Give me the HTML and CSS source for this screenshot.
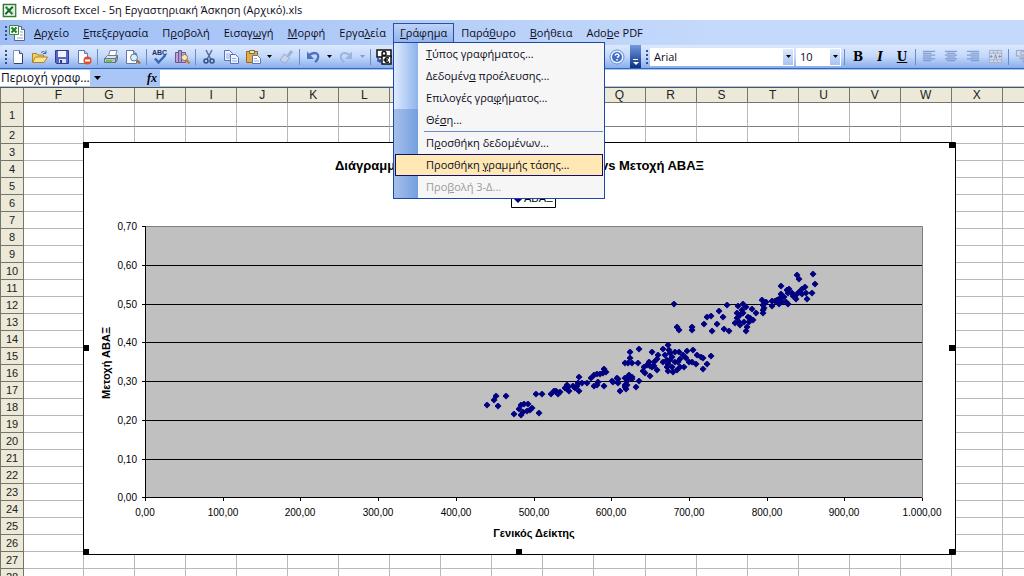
FILE: index.html
```html
<!DOCTYPE html>
<html lang="el">
<head>
<meta charset="utf-8">
<title>Microsoft Excel - 5η Εργαστηριακή Άσκηση (Αρχικό).xls</title>
<link rel="stylesheet" href="styles.css">
</head>
<body>
<div class="app">
  <header class="titlebar">
    <svg class="logo" viewBox="0 0 16 16"><path fill="#fff" stroke="#2f7d32" stroke-width="1.6" d="M1.500 1.500h13v13h-13z"/><path fill="#dcebdc" d="M10 3h4v10h-4z"/><path stroke="#2f8a3a" stroke-width="2.600" d="m4 4 7 8"/><path stroke="#14662a" stroke-width="2.200" d="m11.500 4-8 8"/></svg>
    <span>Microsoft Excel - 5η Εργαστηριακή Άσκηση (Αρχικό).xls</span>
  </header>

  <nav class="menubar">
    <i class="grip"></i>
    <svg class="doc" viewBox="0 0 18 18"><path fill="#fff" stroke="#52658f" d="M6.500 2.500h7l3 3v11h-10z"/><path fill="#c9d6ee" stroke="#52658f" d="M13.500 2.500v3h3"/><path stroke="#8ea1c6" d="M12 8h3M12 11h3M9 14h6"/><path fill="#f2fbf2" stroke="#3c8b42" d="M1.500 1.500h9v9h-9z"/><path stroke="#207a30" stroke-width="2" d="m3.500 3.500 5 5M8.500 3.500l-5 5"/></svg>
    <button class="menu"><u>Α</u>ρχείο</button>
    <button class="menu"><u>Ε</u>πεξεργασία</button>
    <button class="menu">Π<u>ρ</u>οβολή</button>
    <button class="menu">Εισαγ<u>ω</u>γή</button>
    <button class="menu"><u>Μ</u>ορφή</button>
    <button class="menu">Εργα<u>λ</u>εία</button>
    <div class="open">
      <button class="menu active"><u>Γ</u>ράφημα</button>
      <div class="popup">
        <button><u>Τ</u>ύπος γραφήματος...</button>
        <button>Δεδομέν<u>α</u> προέλευσης...</button>
        <button>Επιλογές γρα<u>φ</u>ήματος...</button>
        <button>Θέ<u>σ</u>η...</button>
        <hr>
        <button>Π<u>ρ</u>οσθήκη δεδομένων...</button>
        <button class="hot">Προσθήκη <u>γ</u>ραμμής τάσης...</button>
        <button disabled>Προ<u>β</u>ολή 3-Δ...</button>
      </div>
    </div>
    <button class="menu">Παρά<u>θ</u>υρο</button>
    <button class="menu"><u>Β</u>οήθεια</button>
    <button class="menu">Ado<u>b</u>e PDF</button>
  </nav>

  <div class="toolbars">
    <div class="bar standard">
      <i class="grip"></i>
      <button class="tool" aria-label="Νέο"><svg viewBox="0 0 16 16"><path fill="#fff" stroke="#7f94c4" d="M3.500 1.500h6l3 3v10h-9z"/><path fill="#c3d2ef" stroke="#3c5590" d="M9.500 1.500v3h3"/><path stroke="#2d4377" d="M12.500 5v9.500H4"/></svg></button>
      <button class="tool" aria-label="Άνοιγμα"><svg viewBox="0 0 16 16"><path fill="#f5cf62" stroke="#a9822b" d="M.5 13.500v-9h4l1 1.500h6v3"/><path fill="#ffe48f" stroke="#a9822b" d="m.5 13.500 3-5.500h12l-3.500 5.500z"/><path stroke="#4169a8" d="M9 3.500q2.500-2 4.500 0M14 1.500v3h-3"/></svg></button>
      <button class="tool" aria-label="Αποθήκευση"><svg viewBox="0 0 16 16"><path fill="#5768c4" stroke="#2f3d8c" d="M1.500 1.500h13v13h-12l-1-1z"/><path fill="#f2f5ff" d="M4 2h8v6H4z"/><path fill="#dce2f6" d="M5 10h7v4H5z"/><path fill="#2f3d8c" d="M6 11h2v3H6z"/></svg></button>
      <button class="tool" aria-label="Δικαιώματα"><svg viewBox="0 0 16 16"><path fill="#fff" stroke="#6479a8" d="M2.500 1.500h6l3 3v10h-9z"/><path fill="#c3d2ef" stroke="#6479a8" d="M8.500 1.500v3h3"/><circle cx="11.500" cy="11.500" r="4" fill="#df4e2e"/><path stroke="#fff" stroke-width="2" d="M9 11.500h5"/></svg></button>
      <i class="sep"></i>
      <button class="tool" aria-label="Εκτύπωση"><svg viewBox="0 0 16 16"><path fill="#fff" stroke="#7485a3" d="M5.500 7 7 1.500h7L12.500 7"/><path fill="#dde4ea" stroke="#6d7f92" d="m1.500 9.500 3-3h10l-2 3z"/><path fill="#b4c3c8" stroke="#63757d" d="M1.500 9.500h11v4h-11z"/><path fill="#8fa2a9" stroke="#63757d" d="m12.500 9.500 2-3v4l-2 3z"/><path stroke="#70c060" stroke-width="2" d="M3 12h6"/></svg></button>
      <button class="tool" aria-label="Προεπισκόπηση"><svg viewBox="0 0 16 16"><path fill="#fff" stroke="#6479a8" d="M1.500 1.500h7l3 3v10h-10z"/><path fill="#c3d2ef" stroke="#6479a8" d="M8.500 1.500v3h3"/><circle cx="9" cy="8.500" r="3.500" fill="#d5effb" stroke="#62748e"/><path stroke="#a2722d" stroke-width="2.400" d="m12 11.500 3 3"/></svg></button>
      <i class="sep"></i>
      <button class="tool" aria-label="Ορθογραφία"><svg viewBox="0 0 16 16"><text x="0" y="6" class="abc">ABC</text><path stroke="#3b66b8" stroke-width="2.500" d="m3 9.500 3.500 4L13.500 6"/></svg></button>
      <button class="tool" aria-label="Έρευνα"><svg viewBox="0 0 16 16"><path fill="#c9a0d6" stroke="#76508e" d="M1.500 3.500h3v10h-3z"/><path fill="#9a9fd8" stroke="#605a9f" d="M4.500 1.500h3v12h-3z"/><path fill="#d3a5cc" stroke="#84507b" d="M7.500 3.500h4v10h-4z"/><circle cx="10.500" cy="8.500" r="3" fill="#f5e9c7" stroke="#8a7446"/><path stroke="#b98432" stroke-width="2.400" d="m12.500 11 3 3.500"/></svg></button>
      <i class="sep"></i>
      <button class="tool" aria-label="Αποκοπή"><svg viewBox="0 0 16 16"><path stroke="#536e9e" stroke-width="1.500" d="m5 1 5 9.500M11 1 6 10.500"/><circle cx="5" cy="12" r="2" stroke="#334f87" stroke-width="1.500"/><circle cx="11" cy="12" r="2" stroke="#334f87" stroke-width="1.500"/></svg></button>
      <button class="tool" aria-label="Αντιγραφή"><svg viewBox="0 0 16 16"><path fill="#edf3ff" stroke="#5874b3" d="M1.500 1.500h5l3 3v7h-8z"/><path stroke="#93aadb" d="M3 5h4M3 7h4M3 9h4"/><path fill="#edf3ff" stroke="#5874b3" d="M7.500 5.500h5l3 3v6h-8z"/><path stroke="#93aadb" d="M9 9.500h4M9 12h5"/></svg></button>
      <button class="tool" aria-label="Επικόλληση"><svg viewBox="0 0 16 16"><path fill="#e1ad45" stroke="#916b25" d="M1.500 2.500h11v11h-11z"/><path fill="#eee6bb" stroke="#806a38" d="M4.500 1.500h5v3h-5z"/><path fill="#fff" stroke="#5874b3" d="M7.500 6.500h5l3 3v5h-8z"/><path stroke="#93aadb" d="M9 9.500h3M9 12h5"/></svg></button>
      <button class="drop" aria-label="Επιλογές επικόλλησης"><svg viewBox="0 0 5 3"><path d="M0 0h5L2.500 3z"/></svg></button>
      <button class="tool" aria-label="Πινέλο μορφοποίησης"><svg viewBox="0 0 16 16"><path stroke="#9eb3d5" stroke-width="3" d="m14 2-4 5"/><path fill="#c6d3e8" stroke="#96abcf" d="m6 5 5.500 4L7 14l-5-2.500z"/></svg></button>
      <i class="sep"></i>
      <button class="tool" aria-label="Αναίρεση"><svg viewBox="0 0 16 16"><path stroke="#4f70bf" stroke-width="2.300" d="M4 6q7-4 9 0 1 4-3 7"/><path fill="#4f70bf" d="M2 2.500V10h7z"/></svg></button>
      <button class="drop" aria-label="Λίστα αναίρεσης"><svg viewBox="0 0 5 3"><path d="M0 0h5L2.500 3z"/></svg></button>
      <button class="tool" aria-label="Επανάληψη"><svg viewBox="0 0 16 16"><path stroke="#9db4da" stroke-width="2" d="M12 6Q5 2 3 6q-1 4 3 7"/><path fill="#9db4da" d="M14 2.500V10H7z"/></svg></button>
      <button class="drop dim" aria-label="Λίστα επανάληψης"><svg viewBox="0 0 5 3"><path d="M0 0h5L2.500 3z"/></svg></button>
      <i class="sep"></i>
      <button class="tool" aria-label="Μετατροπή ευρώ"><svg viewBox="0 0 16 16"><path fill="#fff" stroke="#111" stroke-width="1.500" d="M1 1h14v7H1z"/><circle cx="8" cy="4.500" r="2" stroke="#111" stroke-width="1.500"/><path fill="#fff" stroke="#111" stroke-width="1.500" d="M6 7h9v8H6z"/><path stroke="#111" stroke-width="1.500" d="M13 9q-4-1-4 2t4 2M7.500 11H12"/><path stroke="#2846a8" stroke-width="1.500" d="M2 9v3h3M3.500 10.500 5 12l-1.500 1.500"/></svg></button>
      <button class="tool help" aria-label="Βοήθεια"><svg viewBox="0 0 16 16"><circle cx="8" cy="8" r="7" fill="#e8f1ff" stroke="#6c8fce"/><circle cx="8" cy="8" r="5" fill="#3f6fc9"/><path stroke="#fff" stroke-width="1.500" d="M6 6.500Q6.500 5 8 5t2 1.500q0 1-2 2M8 10v1.500"/></svg></button>
      <button class="cap" aria-label="Επιλογές γραμμής εργαλείων"><svg viewBox="0 0 8 8"><path stroke="#fff" d="M1 1.500h5"/><path fill="#fff" d="M1 4h6L4 7z"/></svg></button>
    </div>
    <div class="bar format">
      <i class="grip"></i>
      <span class="combo font"><select aria-label="Γραμματοσειρά"><option>Arial</option></select><i class="arrow"><svg viewBox="0 0 5 3"><path d="M0 0h5L2.500 3z"/></svg></i></span>
      <span class="combo size"><select aria-label="Μέγεθος"><option>10</option></select><i class="arrow"><svg viewBox="0 0 5 3"><path d="M0 0h5L2.500 3z"/></svg></i></span>
      <i class="sep"></i>
      <button class="tool letter"><b>B</b></button>
      <button class="tool letter"><em>I</em></button>
      <button class="tool letter"><u>U</u></button>
      <i class="sep"></i>
      <button class="tool" aria-label="Στοίχιση αριστερά"><svg viewBox="0 0 16 16"><path stroke="#6f8cc4" d="M1 2.500h13M1 4.500h9M1 6.500h13M1 8.500h9M1 10.500h13M1 12.500h9"/></svg></button>
      <button class="tool" aria-label="Στοίχιση στο κέντρο"><svg viewBox="0 0 16 16"><path stroke="#6f8cc4" d="M1 2.500h13M3 4.500h9M1 6.500h13M3 8.500h9M1 10.500h13M3 12.500h9"/></svg></button>
      <button class="tool" aria-label="Στοίχιση δεξιά"><svg viewBox="0 0 16 16"><path stroke="#6f8cc4" d="M1 2.500h13M5 4.500h9M1 6.500h13M5 8.500h9M1 10.500h13M5 12.500h9"/></svg></button>
      <button class="tool" aria-label="Συγχώνευση"><svg viewBox="0 0 16 16"><path fill="#d3dbea" stroke="#a3b0c9" d="M1.500 1.500h13v13h-13zM1.500 4.500h13M1.500 11.500h13M6 1.500v3M10 1.500v3M6 11.500v3M10 11.500v3"/><path stroke="#7d8fb4" d="M2 8h3M11 8h3M7 10.500l1-4.500 1.500 4.500M4 6.500 2.500 8 4 9.500M12 6.500 13.500 8 12 9.500"/></svg></button>
      <i class="sep"></i>
      <button class="tool" aria-label="Νόμισμα"><svg viewBox="0 0 16 16"><path fill="#d3dbea" stroke="#94a3c0" d="M1.500 1.500h13v6h-13z"/><circle cx="8" cy="4.500" r="2" stroke="#94a3c0"/><path stroke="#94a3c0" stroke-width="2" d="M5 10h5M8 13h6"/></svg></button>
    </div>
  </div>

  <div class="formula">
    <input class="name" aria-label="Πλαίσιο ονόματος" value="Περιοχή γραφ...">
    <button class="namedrop" aria-label="Ονόματα"><svg viewBox="0 0 7 4"><path d="M0 0h7L3.500 4z"/></svg></button>
    <button class="fx">fx</button>
    <input class="entry" aria-label="Γραμμή τύπων">
  </div>

  <main class="sheet">
    <table class="cells"><thead><tr></tr></thead><tbody></tbody></table>
    <svg class="chart" viewBox="83 142 873 413" role="img" aria-label="Διάγραμμα">
      <defs><marker id="dot" viewBox="0 0 8 8" refX="4" refY="4" markerWidth="7" markerHeight="7" markerUnits="userSpaceOnUse"><path fill="#000080" d="M4 0 8 4 4 8 0 4z"/></marker></defs>
      <path fill="#fff" stroke="#000" d="M83.500 142.500h872v412h-872z"/>
      <path fill="#c0c0c0" stroke="#808080" d="M145.500 226.500h777v271h-777z"/>
      <path stroke="#000" d="M142 265.500h780M142 304.500h780M142 342.500h780M142 381.500h780M142 420.500h780M142 459.500h780M142 497.500h780M142 226.500h3M145.500 226v275M223.500 498v3M300.500 498v3M378.500 498v3M456.500 498v3M534.500 498v3M611.500 498v3M689.500 498v3M767.500 498v3M844.500 498v3M922.500 498v3"/>
      <polyline class="series" points="487,405 494,400 496,396 506,396 498,406 514,414 519,409 521,405 524,404 528,404 521,415 523,412 527,411 530,410 532,408 539,413 536,394 542,394 551,394 554,391 556,391 558,394 560,392 565,388 567,385 568,387 569,391 567,389 573,386 575,388 577,386 579,377 579,391 578,383 582,383 587,383 591,378 594,375 597,374 600,374 604,369 606,372 603,373 594,386 597,385 598,382 604,386 612,381 617,378 618,383 620,391 625,387 627,385 625,385 626,389 629,375 625,378 628,378 632,379 627,381 632,377 639,381 636,387 613,382 618,379 625,363 628,363 632,363 638,363 630,358 630,352 639,349 652,352 658,355 657,359 644,367 643,371 645,373 650,376 647,365 649,362 650,366 652,367 654,362 654,366 657,370 663,349 668,345 669,350 665,355 670,353 675,352 679,352 663,362 667,360 670,360 668,364 672,367 667,367 668,371 673,372 677,370 680,367 675,362 678,362 680,359 683,355 686,358 684,367 687,351 693,350 689,362 696,364 692,362 697,355 701,357 703,358 711,356 707,364 703,369 672,357 674,304 677,327 679,330 692,327 692,330 704,324 707,317 711,316 712,331 717,324 719,311 723,317 724,329 729,331 727,305 738,306 743,304 742,310 746,307 752,309 756,313 740,315 737,313 743,313 737,318 735,323 739,322 740,325 744,322 748,317 750,318 753,320 749,322 747,327 746,331 762,300 766,302 763,305 764,308 763,313 763,310 772,301 772,306 775,301 781,286 781,294 777,300 778,302 780,298 782,302 779,304 784,297 786,302 788,304 787,290 789,289 788,293 792,293 793,296 796,299 797,294 799,292 802,289 805,287 802,294 806,293 807,299 812,293 815,284 813,274 797,275 799,279"/>
      <path d="M83 142h6v6h-6zM949 142h6v6h-6zM83 345h6v6h-6zM949 345h6v6h-6zM83 549h6v6h-6zM516 549h6v6h-6zM949 549h6v6h-6z"/>
      <g class="title"><text x="335" y="170">Διάγραμμα</text><text x="704" y="170" text-anchor="end">vs Μετοχή ΑΒΑΞ</text></g>
      <path fill="#fff" stroke="#000" d="M511.500 189.500h44v18h-44z"/><path fill="#000080" d="m518 195 4 4-4 4-4-4z"/><text class="key" x="524" y="202">ΑΒΑΞ</text>
      <g text-anchor="end"><text x="137" y="230">0,70</text><text x="137" y="269">0,60</text><text x="137" y="308">0,50</text><text x="137" y="346">0,40</text><text x="137" y="385">0,30</text><text x="137" y="424">0,20</text><text x="137" y="463">0,10</text><text x="137" y="501">0,00</text></g>
      <g text-anchor="middle"><text x="145" y="516">0,00</text><text x="223" y="516">100,00</text><text x="300" y="516">200,00</text><text x="378" y="516">300,00</text><text x="456" y="516">400,00</text><text x="534" y="516">500,00</text><text x="611" y="516">600,00</text><text x="689" y="516">700,00</text><text x="767" y="516">800,00</text><text x="844" y="516">900,00</text><text x="922" y="516">1.000,00</text>
      <text class="axis" x="534" y="537">Γενικός Δείκτης</text><text class="axis" transform="translate(110 363) rotate(-90)">Μετοχή ΑΒΑΞ</text></g>
    </svg>
  </main>
</div>
<script src="sheet.js"></script>
</body>
</html>
```
FILE: styles.css
```css
* { box-sizing: border-box; }
body { margin: 0; background: #fff; color: #0c0c1c; font: 11px/16px "Open Sans", "Noto Sans", sans-serif; }
button, input, select { margin: 0; padding: 0; border: 0; background: none; color: inherit; font: inherit; }
svg { display: block; fill: none; }
.app { height: 100vh; display: flex; flex-direction: column; overflow: hidden; }

.titlebar { display: flex; align-items: center; gap: 5px; height: 20px; padding-left: 2px; flex: none; }
.logo { width: 15px; height: 15px; }

.menubar { display: flex; align-items: center; height: 25px; padding-left: 5px; flex: none; background: linear-gradient(90deg, #9ebef5, #c4d9fb 70%); }
.doc { width: 18px; height: 18px; margin: 0 1px; }
.grip { width: 2px; height: 14px; flex: none; background: repeating-linear-gradient(#34508c 0 2px, transparent 2px 4px); }
.menu { height: 20px; padding: 0 6px; border: 1px solid transparent; border-bottom: 0; white-space: nowrap; }
.open { position: relative; z-index: 2; }
.active { border-color: #2c4fa8; background: linear-gradient(#bdd2f6, #8fb2ec); display: block; }
.popup { position: absolute; top: 19px; left: 0; width: 212px; padding: 0 1px; border: 1px solid #1e48a8; display: flex; flex-direction: column;
  background: linear-gradient(#fff0 66px, #4d80d066 66px) 0 0 / 24px 100% no-repeat, linear-gradient(90deg, #deebfe, #8db3ea) 0 0 / 24px 100% no-repeat, #f6f6f6; }
.popup button { height: 22px; padding-left: 30px; border: 1px solid transparent; text-align: left; white-space: nowrap; }
.popup hr { width: 179px; height: 1px; margin: 0 0 0 auto; border: 0; background: #6a8ccb; }
.popup .hot { border-color: #10106c; background: #ffe8b4; }
.popup button:disabled { color: #9a9a9a; }

.toolbars { display: flex; height: 24px; flex: none; background: #c4d9fb; }
.bar { display: flex; align-items: center; padding-left: 5px; background: linear-gradient(#dce9fe, #c3d8fa 50%, #87aeec); border-bottom: 1px solid #3765b4; }
.standard { flex: none; width: 641px; border-radius: 4px 0 0 0; }
.format { flex: 1; min-width: 0; overflow: hidden; }
.tool { flex: none; display: grid; place-items: center; width: 22px; height: 22px; }
.tool svg { width: 16px; height: 16px; }
.format .tool svg { width: 15px; height: 15px; }
.drop { flex: none; display: grid; place-items: center; width: 11px; height: 22px; }
.drop svg, .arrow svg { width: 5px; height: 3px; fill: #000; }
.dim svg { fill: #7f98c8; }
.sep { flex: none; width: 1px; height: 16px; margin: 0 2px; background: #6a8ccb; }
.help { margin-left: auto; }
.cap { flex: none; align-self: stretch; display: grid; place-items: end center; width: 11px; margin-left: 2px; padding-bottom: 2px; background: linear-gradient(#7099dd, #0c2f82); }
.cap svg { width: 8px; height: 8px; }
.abc { fill: #1d2e66; font: bold 7px "Liberation Sans", sans-serif; }
.combo { flex: none; display: flex; height: 18px; padding: 1px; background: #fff; }
.combo select { flex: 1; min-width: 0; padding-left: 3px; appearance: none; }
.arrow { display: grid; place-items: center; width: 10px; background: linear-gradient(#dce9fe, #a5c3f3); }
.font { width: 144px; margin-left: 2px; }
.size { width: 45px; margin: 0 1px 0 2px; }
.letter { color: #000; font: bold 12px/16px "DejaVu Serif", "Liberation Serif", serif; }

.formula { display: flex; height: 18px; padding: 1px 0; flex: none; background: #a9c6f7; }
.name { width: 90px; padding-left: 1px; background: #fff; font-size: 12px; }
.namedrop { display: grid; place-items: center; width: 15px; }
.namedrop svg { width: 7px; height: 4px; fill: #000; }
.fx { margin-left: auto; flex: none; width: 16px; color: #000; font: italic bold 12px/16px "Liberation Serif", serif; }
.entry { flex: none; width: calc(100% - 160px); background: #fff; }

.sheet { position: relative; flex: 1; min-height: 0; overflow: hidden; font-family: "Liberation Sans", Arial, sans-serif; }
.cells { table-layout: fixed; width: calc(100% + 30px); border-spacing: 0; border-top: 1px solid #55554d; }
.cells th, .cells td { height: 17px; padding: 0; border: 0 solid #b9b9b9; border-width: 0 1px 1px 0; }
.cells th { background: #ece9d8; border-color: #77756a; color: #222; font-size: 11px; font-weight: 400; line-height: 14px; }
.cells thead th { height: 15px; font-size: 12px; }
.cells th:first-child { border-left: 1px solid #77756a; }
.cells .tall th, .cells .tall td { height: 24px; }
.cells .tall td { border-bottom-color: #808080; }
.cells .corner { width: 24px; }
.cells .wide { width: 60px; padding-left: 10px; }
.chart { position: absolute; left: 83px; top: 55px; width: 873px; height: 413px; fill: #000; font-size: 10px; }
.series { fill: none; marker: url(#dot); }
.title { font-size: 13px; font-weight: 700; }
.axis, .key { font-size: 11px; }
.axis { font-weight: 700; }
```
FILE: sheet.js
```js
const columns = [...'FGHIJKLMNOPQRSTUVWX', ''];
const head = document.querySelector('.cells thead tr');
const body = document.querySelector('.cells tbody');

head.innerHTML = '<th class="corner"></th>' + columns
  .map((c, i) => `<th${i === 0 ? ' class="wide"' : ''}>${c}</th>`).join('');

for (let n = 1; n <= 28; n++) {
  const row = body.insertRow();
  if (n === 1) row.className = 'tall';
  row.innerHTML = `<th>${n}</th>` + '<td></td>'.repeat(columns.length);
}
```
